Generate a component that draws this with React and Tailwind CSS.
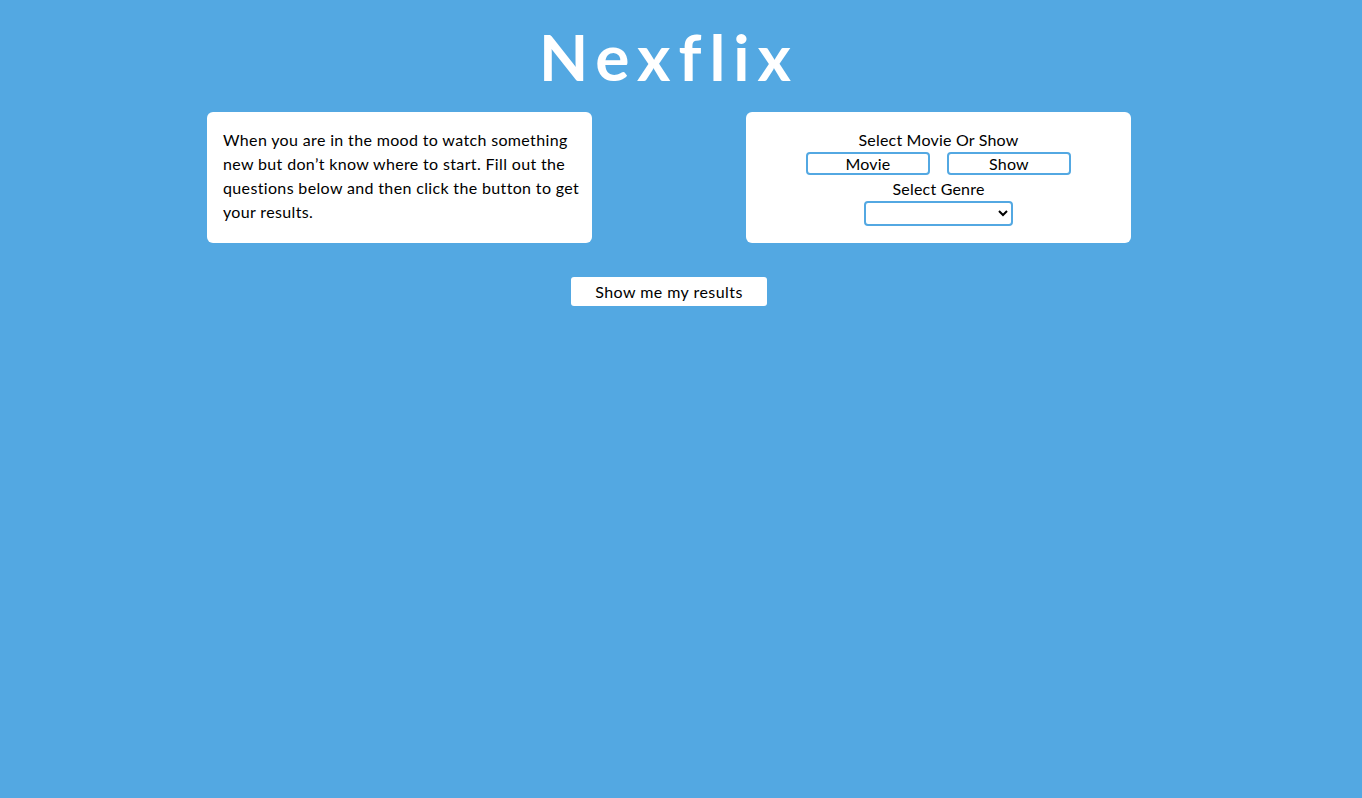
export default function App() {
  return (
    <div className="min-h-[798px] bg-[#53a8e2] font-['Lato','Noto_Sans',sans-serif] text-black">
      <div className="w-[1338px] flex flex-col items-center">
        {/* Title */}
        <h1 className="mt-[22px] h-[70px] text-[64px] leading-[70px] font-bold tracking-[8px] text-white">
          Nexflix
        </h1>

        {/* Cards */}
        <div className="mt-[20px] flex gap-[154px]">
          <div className="w-[385px] h-[131px] bg-white rounded-md px-4 py-4">
            <p className="text-[16px] leading-[24px] tracking-[0.35px] whitespace-nowrap">
              When you are in the mood to watch something
              <br />
              new but don’t know where to start. Fill out the
              <br />
              questions below and then click the button to get
              <br />
              your results.
            </p>
          </div>

          <div className="w-[385px] h-[131px] bg-white rounded-md pt-4 flex flex-col items-center tracking-[0.2px]">
            <p className="text-[16px] leading-[24px]">Select Movie Or Show</p>
            <div className="flex gap-[17px]">
              <button className="w-[124px] h-[23px] border-2 border-[#53a8e2] rounded-[4px] text-[16px] leading-[18px]">
                Movie
              </button>
              <button className="w-[124px] h-[23px] border-2 border-[#53a8e2] rounded-[4px] text-[16px] leading-[18px]">
                Show
              </button>
            </div>
            <p className="text-[16px] leading-[24px] mt-[2px]">Select Genre</p>
            <select className="w-[149px] h-[25px] border-2 border-[#53a8e2] rounded-[4px] bg-white text-[14px]">
              <option></option>
            </select>
          </div>
        </div>

        {/* Submit */}
        <button className="mt-[34px] w-[196px] h-[29px] bg-white rounded-[3px] text-[16px] leading-[29px] tracking-[0.45px]">
          Show me my results
        </button>
      </div>
    </div>
  )
}
